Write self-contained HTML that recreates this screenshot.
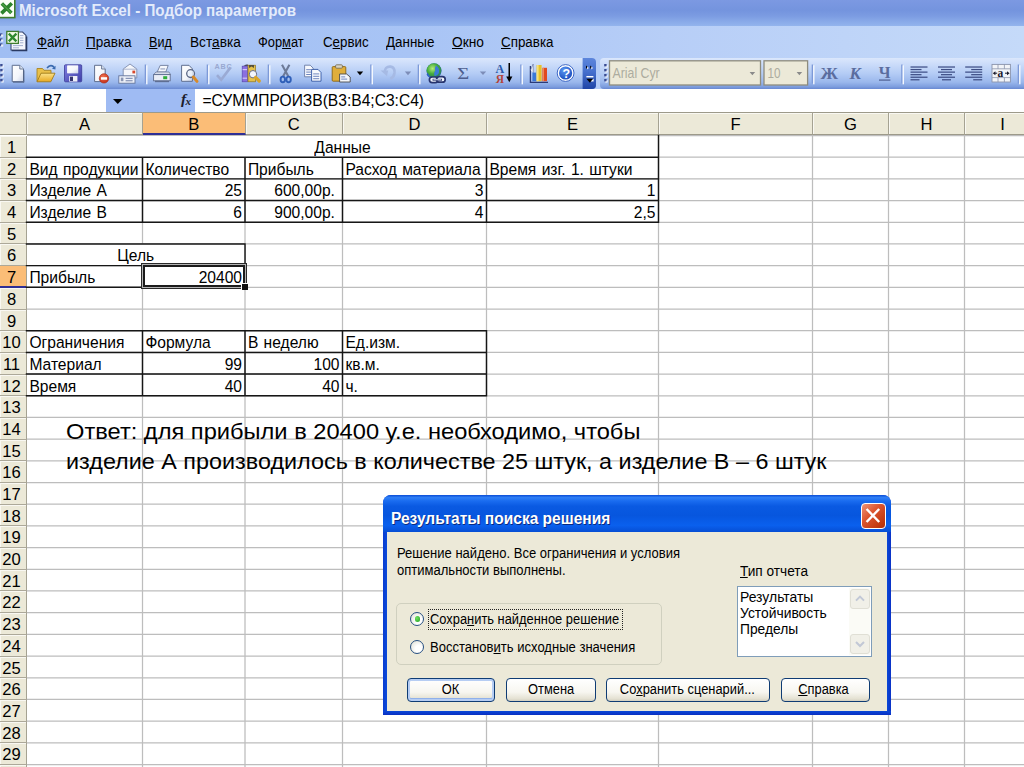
<!DOCTYPE html><html><head><meta charset="utf-8"><title>Excel</title><style>*{box-sizing:border-box;margin:0;padding:0}
html,body{width:1024px;height:767px;overflow:hidden;background:#fff;font-family:"Liberation Sans",sans-serif;}
body{position:relative}
.sx{display:inline-block;transform-origin:0 50%;white-space:nowrap}
#title{position:absolute;left:0;top:0;width:1024px;height:26px;background:linear-gradient(#7c99e2 0,#7494de 40%,#7c9ce2 62%,#8aabe9 85%,#93b4ed 100%);}
#title .t{position:absolute;left:19px;top:0px;font-size:16.8px;line-height:22px;font-weight:bold;color:#e3ebfb;white-space:nowrap;transform:scaleX(.903);transform-origin:0 50%}
#menu{position:absolute;left:0;top:25.5px;width:1024px;height:33px;background:linear-gradient(90deg,#a0bef3 0,#a8c4f5 40%,#b7cef7 65%,#c5daf9 100%);}
#menu span{position:absolute;top:8.5px;font-size:14px;line-height:16px;color:#000;white-space:nowrap;transform:scaleX(.9);transform-origin:0 50%}
#tb{position:absolute;left:0;top:57px;width:1024px;height:32px;background:linear-gradient(90deg,#a0bef3 0,#a8c4f5 40%,#b7cef7 65%,#c5daf9 100%)}
#tb1,#tb2{position:absolute;top:1px;height:31px;background:linear-gradient(#dbe7fc 0,#cbdcfa 20%,#b4ccf5 50%,#9ab7ec 78%,#7f9fdf 92%,#6989d2 100%);}
#tb1{left:0;width:596px;border-radius:0 4px 4px 0}
#tb2{left:600px;width:430px;border-radius:4px 0 0 4px}
#fb{position:absolute;left:0;top:89px;width:1024px;height:24px;background:#9fbbf3}
#fb .nb{position:absolute;left:0;top:0;width:106px;height:24px;background:#fff;font-size:15.6px;line-height:24px;padding-left:42.5px}
#fb .fx{position:absolute;left:195px;top:0;width:829px;height:24px;background:#fff;font-size:15.6px;line-height:24px;padding-left:7.5px;white-space:nowrap}
#sheet{position:absolute;left:0;top:0;width:1024px;height:767px;overflow:hidden}
.ch{position:absolute;top:112px;height:23px;background:#ece9d8;border-right:1px solid #a5a292;border-bottom:1px solid #9d9a8a;border-top:1px solid #9d9a8a;box-shadow:inset 1px 1px 0 #f9f8f2;font-size:16.6px;line-height:24.6px;text-align:center;color:#000}
.ch.sel{background:#fbbd77;border-bottom:2px solid #2f2f96;line-height:24.6px;box-shadow:none}
.corner{position:absolute;left:0;top:112px;width:27px;height:23px;background:#ece9d8;border-right:1px solid #aca899;border-bottom:1px solid #9d9a8a;border-top:1px solid #9d9a8a}
.rh{position:absolute;left:0;width:27px;height:21.69px;line-height:24px;background:#ece9d8;border-right:1px solid #a5a292;border-bottom:1px solid #aca899;box-shadow:inset 0 1px 0 #f9f8f2,inset 1px 0 0 #f9f8f2;font-size:16.6px;text-align:center;padding-right:3px;color:#000;overflow:hidden}
.rh.sel{background:#fbbd77;border-bottom:2px solid #2f2f96;box-shadow:none}
.gh{position:absolute;left:27px;width:997px;height:1px;background:#c6c6c6}
.gv{position:absolute;top:135px;width:1px;height:640px;background:#c6c6c6}
.c{position:absolute;height:21.69px;line-height:23.4px;font-size:15.6px;white-space:nowrap;overflow:visible;color:#000;word-spacing:1px;transform:scaleY(1.07);transform-origin:50% 78%}
.w{position:absolute;background:#fff}
.ov{position:absolute;left:0;top:0}
.bh{position:absolute;height:1.5px;background:#111}
.bv{position:absolute;width:1.5px;background:#111}
.selbox{position:absolute;border:1px solid #2a2a2a}
.selbox .in{position:absolute;left:0;top:0;right:0;bottom:0;border:1px solid #b4b4b4;box-shadow:inset 0 0 0 2px #1c1c1c}
.selh{position:absolute;width:6.6px;height:7px;background:#111;border:1px solid #fff;border-right:none;border-bottom:none}
#ans{position:absolute;left:65.6px;top:417px;font-size:22px;line-height:30.3px;color:#000;white-space:nowrap}
#ans div{transform-origin:0 50%;width:max-content}
/* dialog */
#dlg{position:absolute;left:383px;top:495.4px;width:508px;height:219.4px;background:linear-gradient(90deg,#0a3cd0,#0a52e0 1.2%,#0a52e0 98.8%,#0a32c6);border-radius:8px 8px 0 0;font-size:14px;color:#000}
#dlg .tbar{position:absolute;left:0;top:0;width:100%;height:37px;border-radius:8px 8px 0 0;background:linear-gradient(#0a4cd6 0,#2f7ff6 7%,#1a6cf0 16%,#0a5ae2 30%,#0756de 55%,#0a60ee 82%,#064ed4 100%)}
#dlg .tt{position:absolute;left:7.6px;top:12.6px;font-size:17.4px;line-height:20px;font-weight:bold;color:#fff;white-space:nowrap;transform:scaleX(.893);transform-origin:0 50%;text-shadow:1px 1px 0 #0a2a80}
#dlg .body{position:absolute;left:4px;top:37px;width:500px;height:179px;background:#ece9d8}
#dlg .x{position:absolute;left:477.8px;top:7.6px;width:25px;height:26.4px;border-radius:4px;border:1.6px solid #fff;background:linear-gradient(135deg,#ee9478,#dc5630 40%,#c23a12 80%,#b02e0a)}
#dlg .lbl{position:absolute;white-space:nowrap;line-height:17px;transform:scaleX(.92);transform-origin:0 50%}
#dlg .grp{position:absolute;left:12.5px;top:107.5px;width:266.5px;height:62.5px;border:1px solid #d0d0bf;border-radius:5px}
#dlg .radio{position:absolute;width:14.4px;height:14.4px;border-radius:50%;border:1.2px solid #264f82;background:radial-gradient(circle at 65% 65%,#fff 30%,#dcdccf)}
#dlg .radio.on::after{content:"";position:absolute;left:3.6px;top:3.6px;width:5.6px;height:5.6px;border-radius:50%;background:radial-gradient(circle at 35% 35%,#6fe060,#21a121)}
#dlg .focus{position:absolute;left:44.5px;top:114px;width:195px;height:20.5px;border:1.2px dotted #222}
#dlg .btn{position:absolute;top:182.5px;height:24px;border:1.2px solid #0f3c74;border-radius:4px;background:linear-gradient(#fff,#f7f6f0 60%,#e4e1d2 90%,#d2cfc0);text-align:center;line-height:21px;font-size:14px;white-space:nowrap}
#dlg .btn span{display:inline-block;transform:scaleX(.92)}
#dlg .btn.def{box-shadow:inset 0 0 0 2px #b6cdf3, inset 0 -1px 0 2px #8fb0ea}
#dlg .list{position:absolute;left:353.5px;top:90.5px;width:135px;height:71px;background:#fff;border:1.2px solid #7f9db9}
#dlg .list .li{position:absolute;left:2.4px;white-space:nowrap;line-height:17px;transform:scaleX(.92);transform-origin:0 50%}
#dlg .sb{position:absolute;right:1px;width:20px;height:20px;border:1px solid #e0dfd5;border-radius:3px;background:#f1f0e8}
#dlg .sbt{position:absolute;right:1px;top:1px;width:21px;height:67px;background:#fbfbf6}
</style></head><body>
<div id="title"><svg width="16" height="19" style="position:absolute;left:0;top:0" viewBox="0 0 16 19"><rect x="-2" y="-2" width="16.8" height="19.6" fill="#fbfff6" stroke="#3f7d2c" stroke-width="1.6"/><path d="M1.8 3.4 l9.6 9.6 M11.8 3.2 l-10.4 10.2" stroke="#2c842c" stroke-width="3.6"/><path d="M2 3.6 l9.2 9.2" stroke="#4fa043" stroke-width="1.2"/></svg><div class="t">Microsoft Excel - Подбор параметров</div></div>
<div id="menu">
<svg width="30" height="32" style="position:absolute;left:0;top:.5px" viewBox="0 26 30 32"><g fill="#35478c"><rect x="0" y="33.4" width="2.4" height="2.4"/><rect x="0" y="38.4" width="2.4" height="2.4"/><rect x="0" y="43.4" width="2.4" height="2.4"/></g><g fill="#fff" opacity=".85"><rect x="1" y="34.4" width="2.2" height="2.2"/><rect x="1" y="39.4" width="2.2" height="2.2"/><rect x="1" y="44.4" width="2.2" height="2.2"/></g>
<path d="M11 32 h11.6 l3.4 3.4 v14.6 h-15 z" fill="#f4f7fc" stroke="#3a4a72" stroke-width="1.1"/><path d="M11.6 50.6 h15 v-14" fill="none" stroke="#2a3a62" stroke-width="1.4"/><path d="M20 35.6 h3.4 M20 38 h3.4 M20 40.4 h3.4 M20 42.8 h3.4 M13 45.6 h10 M13 47.8 h6" stroke="#9aa8c8" stroke-width=".9"/>
<rect x="6.8" y="31.4" width="11.6" height="12" fill="#f3fbe6" stroke="#3f7d2c" stroke-width="1.3"/><path d="M8.8 33.6 l7.6 7.8 M16.4 33.6 l-7.6 7.8" stroke="#2f8a2f" stroke-width="2.3"/></svg>
<span style="left:36.6px;transform:scaleX(.93)"><u>Ф</u>айл</span>
<span style="left:86.2px;transform:scaleX(.965)"><u>П</u>равка</span>
<span style="left:149.3px;transform:scaleX(.9)"><u>В</u>ид</span>
<span style="left:190.4px;transform:scaleX(.975)">Вст<u>а</u>вка</span>
<span style="left:258.2px;transform:scaleX(.92)">Фор<u>м</u>ат</span>
<span style="left:322.6px;transform:scaleX(.95)">С<u>е</u>рвис</span>
<span style="left:386px;transform:scaleX(.957)"><u>Д</u>анные</span>
<span style="left:452px;transform:scaleX(.98)"><u>О</u>кно</span>
<span style="left:501.4px;transform:scaleX(.955)"><u>С</u>правка</span>
</div>
<div id="tb"><div id="tb1"></div><div id="tb2"></div></div>
<svg id="tbsvg" width="1024" height="33" viewBox="0 57 1024 33" style="position:absolute;left:0;top:57px"><defs><linearGradient id="pg" x1="0" y1="0" x2="1" y2="1"><stop offset="0" stop-color="#fff"/><stop offset=".6" stop-color="#f4f6fb"/><stop offset="1" stop-color="#c9d2e6"/></linearGradient><linearGradient id="fold" x1="0" y1="0" x2="0" y2="1"><stop offset="0" stop-color="#fbe38a"/><stop offset="1" stop-color="#e8a820"/></linearGradient><linearGradient id="flop" x1="0" y1="0" x2="1" y2="1"><stop offset="0" stop-color="#7f7fe0"/><stop offset="1" stop-color="#3f3fa8"/></linearGradient><radialGradient id="globe" cx=".4" cy=".35" r=".7"><stop offset="0" stop-color="#b4ec7c"/><stop offset=".5" stop-color="#45ac3c"/><stop offset=".85" stop-color="#2f8a4a" stop-opacity=".9"/><stop offset="1" stop-color="#2a6ab8" stop-opacity=".6"/></radialGradient><radialGradient id="help" cx=".4" cy=".3" r=".8"><stop offset="0" stop-color="#5b97f2"/><stop offset="1" stop-color="#1546b8"/></radialGradient><radialGradient id="red" cx=".4" cy=".3" r=".8"><stop offset="0" stop-color="#f07050"/><stop offset="1" stop-color="#c02810"/></radialGradient><linearGradient id="cap" x1="0" y1="0" x2="0" y2="1"><stop offset="0" stop-color="#5d86dc"/><stop offset=".45" stop-color="#456fcd"/><stop offset="1" stop-color="#1f44a6"/></linearGradient></defs><rect x="1.3" y="65.2" width="2.3" height="2.3" fill="#fff"/><rect x="0.2" y="64" width="2.4" height="2.4" fill="#3a4c92"/><rect x="1.3" y="70.2" width="2.3" height="2.3" fill="#fff"/><rect x="0.2" y="69" width="2.4" height="2.4" fill="#3a4c92"/><rect x="1.3" y="75.2" width="2.3" height="2.3" fill="#fff"/><rect x="0.2" y="74" width="2.4" height="2.4" fill="#3a4c92"/><rect x="1.3" y="80.2" width="2.3" height="2.3" fill="#fff"/><rect x="0.2" y="79" width="2.4" height="2.4" fill="#3a4c92"/><path d="M12.2 65.3 h7.6 l3.7 3.7 v12.6 h-11.3 z" fill="url(#pg)" stroke="#5f6f8f" stroke-width="1"/><path d="M19.8 65.3 v3.7 h3.7" fill="#dfe5f2" stroke="#5f6f8f" stroke-width=".9"/><path d="M13 82.3 h11 v-12" fill="none" stroke="#3a4a6a" stroke-width="1" opacity=".6"/><path d="M37 81.5 v-13 h5.5 l1.5 1.8 h7 v3" fill="#e9c04a" stroke="#a88422" stroke-width=".9"/><path d="M37 81.8 l4 -8.6 h14 l-4.2 8.6 z" fill="url(#fold)" stroke="#a07a18" stroke-width=".9"/><path d="M47 68 q4 -4.5 7.3 -0.6" fill="none" stroke="#3a6ab0" stroke-width="1.6"/><path d="M52 68.8 l3.4 0.6 l0.2 -3.6 z" fill="#3a6ab0"/><rect x="64.5" y="64.8" width="17.2" height="17" rx="1" fill="url(#flop)" stroke="#3a3a98" stroke-width=".8"/><rect x="67.3" y="65.6" width="10.8" height="7.6" fill="#fff"/><rect x="67.3" y="65.6" width="10.8" height="7.6" fill="url(#pg)"/><rect x="69.2" y="76" width="8.2" height="5.6" fill="#eef0f8"/><rect x="70" y="76.6" width="3" height="4.4" fill="#34346e"/><path d="M94.6 65.3 h7 l3.6 3.7 v12.6 h-10.6 z" fill="url(#pg)" stroke="#5f6f8f" stroke-width="1"/><path d="M101.6 65.3 v3.7 h3.6" fill="#dfe5f2" stroke="#5f6f8f" stroke-width=".9"/><circle cx="104" cy="78.4" r="4.7" fill="url(#red)" stroke="#a82a14" stroke-width=".6"/><rect x="100.9" y="77.2" width="6.2" height="2.5" fill="#fff"/><path d="M123.2 77 v-8 l6.8 -5 l6.8 5 v9 z" fill="#f6f7fb" stroke="#7e8cae" stroke-width=".9"/><path d="M123.4 69.2 h13.4" stroke="#9aa6c4" stroke-width=".8"/><rect x="132.4" y="70.6" width="2.8" height="2.8" fill="#d8482c"/><rect x="118.8" y="75.8" width="16.2" height="7.4" fill="#eef1f8" stroke="#62739b" stroke-width=".9"/><rect x="120.8" y="77.6" width="2.6" height="3.6" fill="#8a96b4"/><rect x="125.6" y="77.8" width="7" height="1.1" fill="#7d8aae"/><rect x="125.6" y="80.2" width="7" height="1.1" fill="#7d8aae"/><rect x="144.7" y="64.5" width="1.4" height="19" fill="#7d9ad8"/><rect x="146.1" y="65.3" width="1.4" height="19" fill="#f4f8fe"/><path d="M157.2 72 l3 -6.6 h8 l-2.4 6.6 z" fill="#f6f8fc" stroke="#6e7c9c" stroke-width=".9"/><rect x="160.4" y="68" width="4.8" height="1.8" fill="#b8c0d4"/><path d="M153.6 74.6 l2.4 -2.6 h13 l1.6 2.6 z" fill="#d6dcea" stroke="#6e7c9c" stroke-width=".8"/><rect x="153.6" y="74.6" width="16.6" height="6.2" fill="#e9edf6" stroke="#5c6b8e" stroke-width=".9"/><rect x="163.2" y="76.2" width="4" height="3" fill="#2fae3a"/><rect x="155" y="80.8" width="14" height="1.4" fill="#5f6e92"/><path d="M181.6 65.3 h7.4 l3.4 3.6 v12.4 h-10.8 z" fill="url(#pg)" stroke="#5f6f8f" stroke-width="1"/><circle cx="190.6" cy="73.6" r="3.9" fill="#eaf1fb" fill-opacity=".85" stroke="#5a6684" stroke-width="1.3"/><path d="M193.4 77 l3.6 4.4" stroke="#d98a28" stroke-width="3" stroke-linecap="round"/><rect x="206.7" y="64.5" width="1.4" height="19" fill="#7d9ad8"/><rect x="208.1" y="65.3" width="1.4" height="19" fill="#f4f8fe"/><text x="214.6" y="69.4" font-family="Liberation Sans" font-size="7.2" font-weight="bold" fill="#98a8d0" textLength="17">ABC</text><path d="M217 75.2 l4.2 4.6 l9.4 -12.4" fill="none" stroke="#9aaad4" stroke-width="2.6"/><rect x="242.2" y="66.2" width="5.2" height="15.6" fill="#8a6fe0" stroke="#5a48b0" stroke-width=".7"/><rect x="242.6" y="69" width="4.4" height="1.2" fill="#cfc4f6"/><rect x="242.6" y="77.6" width="4.4" height="1.2" fill="#cfc4f6"/><path d="M243.4 66 l2.6 -1.6 h2 v1.6z" fill="#4a4a6a"/><rect x="248" y="65.2" width="7.4" height="16.6" fill="#e4c04a" stroke="#8c7420" stroke-width=".7"/><path d="M249 65 h5 v3 l-2.5 -1.6 l-2.5 1.6z" fill="#55503a"/><circle cx="253" cy="74.2" r="3.7" fill="#f2f5fb" stroke="#6a6e84" stroke-width="1"/><path d="M255.6 77.4 l3.6 3.6" stroke="#d9a428" stroke-width="3.2" stroke-linecap="round"/><rect x="267.7" y="64.5" width="1.4" height="19" fill="#7d9ad8"/><rect x="269.1" y="65.3" width="1.4" height="19" fill="#f4f8fe"/><path d="M282 64.8 L288.4 76.6 M289.4 64.8 L283 76.6" stroke="#6d7b98" stroke-width="2.1" fill="none"/><ellipse cx="282.8" cy="79.4" rx="2.2" ry="2.8" fill="none" stroke="#2f5fb8" stroke-width="1.9"/><ellipse cx="288.6" cy="79.4" rx="2.2" ry="2.8" fill="none" stroke="#2f5fb8" stroke-width="1.9"/><path d="M304.6 65.2 h5.6 l3 3 v8.6 h-8.6 z" fill="#f7f9fd" stroke="#6a7ca6" stroke-width=".9"/><rect x="306.20000000000005" y="69.2" width="5.199999999999999" height="1" fill="#6f86bd"/><rect x="306.20000000000005" y="71.60000000000001" width="5.199999999999999" height="1" fill="#6f86bd"/><rect x="306.20000000000005" y="74.0" width="5.199999999999999" height="1" fill="#6f86bd"/><path d="M311.6 69.4 h6.4 l3 3 v8.8 h-9.4 z" fill="#f7f9fd" stroke="#2f55a4" stroke-width=".9"/><rect x="313.20000000000005" y="73.4" width="6.0" height="1" fill="#6f86bd"/><rect x="313.20000000000005" y="75.80000000000001" width="6.0" height="1" fill="#6f86bd"/><rect x="313.20000000000005" y="78.2" width="6.0" height="1" fill="#6f86bd"/><rect x="332.2" y="66.6" width="13.6" height="14.6" rx="1" fill="#e0ae3a" stroke="#8a6414" stroke-width=".9"/><rect x="335.6" y="64.8" width="6.8" height="3.4" rx="1" fill="#d9d4c4" stroke="#6f664c" stroke-width=".8"/><path d="M339.6 74 h7 l3.6 3 v5 h-10.6 z" fill="#f4f6fb" stroke="#4a4a4a" stroke-width=".9"/><rect x="341.2" y="76.4" width="4" height="1" fill="#6f86bd"/><rect x="341.2" y="78.6" width="6" height="1" fill="#6f86bd"/><path d="M356.8 71.60000000000001 h6.4 l-3.2 3.6 z" fill="#000"/><rect x="370.2" y="64.5" width="1.4" height="19" fill="#7d9ad8"/><rect x="371.6" y="65.3" width="1.4" height="19" fill="#f4f8fe"/><path d="M384.5 72.8 q0.4 -6.6 6 -6.2 q4.6 0.8 4 6.4 q-0.6 4.4 -4.2 5.8" fill="none" stroke="#a6bae4" stroke-width="2.6"/><path d="M380.6 70.6 h7.6 l-1.2 5.6 z" fill="#a6bae4"/><path d="M404.8 71.60000000000001 h6.4 l-3.2 3.6 z" fill="#7d8db8"/><rect x="417.7" y="64.5" width="1.4" height="19" fill="#7d9ad8"/><rect x="419.1" y="65.3" width="1.4" height="19" fill="#f4f8fe"/><circle cx="434" cy="70.8" r="7.5" fill="#2f6fd0"/><circle cx="434" cy="70.8" r="7.5" fill="url(#globe)"/><path d="M436.2 65.4 q3.8 2.6 2.6 7.8 q-2 3.2 -4.4 2.6 q-1 -3 0.8 -5.4 q-0.8 -3 1 -5z" fill="#3a7ad8"/><path d="M427.4 72.4 q1.6 3.6 5 5.4 q-4.4 0.4 -5.8 -3.4z" fill="#2f62c4"/><rect x="429.4" y="77" width="8.6" height="5.6" rx="2.8" fill="#eef2fa" stroke="#27346e" stroke-width="1.7"/><rect x="436.6" y="76.6" width="8.6" height="5.6" rx="2.8" fill="#eef2fa" stroke="#27346e" stroke-width="1.7"/><rect x="432.6" y="78.8" width="9.4" height="1.9" fill="#27346e"/><rect x="433.4" y="79.3" width="7.8" height=".9" fill="#dfe6f6"/><text x="457.2" y="79.4" font-family="Liberation Serif" font-size="17.5" fill="#4d5e8e" textLength="12" lengthAdjust="spacingAndGlyphs">Σ</text><path d="M479.8 71.4 h6.4 l-3.2 3.6 z" fill="#7d8db8"/><text x="495.6" y="72.6" font-family="Liberation Serif" font-size="12" font-weight="bold" fill="#2a58a8">А</text><text x="495.8" y="83.2" font-family="Liberation Serif" font-size="11.5" font-weight="bold" fill="#b4443a">Я</text><rect x="508.5" y="63" width="1.5" height="16" fill="#000"/><path d="M506.2 76.6 h6.2 l-3.1 5.6z" fill="#000"/><rect x="520.2" y="64.5" width="1.4" height="19" fill="#7d9ad8"/><rect x="521.6" y="65.3" width="1.4" height="19" fill="#f4f8fe"/><path d="M530.4 66 v16.4 h17.6" fill="none" stroke="#2a3a78" stroke-width="1.3"/><path d="M530.6 70 l2.6 -6 v9" fill="#f4f6fb" stroke="#5a6a9a" stroke-width=".6"/><rect x="532.4" y="72.6" width="3.6" height="8.6" fill="#3a78d8"/><rect x="536.6" y="65" width="5" height="16.2" fill="#e8c028"/><rect x="537" y="65" width="1.6" height="16.2" fill="#f6e27a"/><rect x="542.4" y="67.8" width="4.6" height="13.4" fill="#e04a20"/><rect x="542.6" y="67.8" width="1.4" height="13.4" fill="#f08a5a"/><circle cx="565.6" cy="73" r="8.4" fill="#fff" stroke="#2a58c0" stroke-width=".9"/><circle cx="565.6" cy="73" r="6.6" fill="url(#help)"/><text x="562.4" y="77.8" font-family="Liberation Sans" font-size="12.5" font-weight="bold" fill="#fff">?</text><path d="M582.6 58 h9.4 q4 0 4 4 v23 q0 4 -4 4 h-9.4z" fill="url(#cap)"/><path d="M586 65.6 l2 1.6 l-2 1.6z M590.2 65.6 l2 1.6 l-2 1.6z" fill="#000"/><path d="M587 66.4 l2 1.6 l-2 1.6z M591.2 66.4 l2 1.6 l-2 1.6z" fill="#fff" opacity=".8"/><rect x="586.4" y="76" width="7" height="1.4" fill="#fff"/><path d="M586.4 78.8 h7 l-3.5 4z" fill="#000"/><path d="M590.6 81.6 l3 -3.2 v3.2z" fill="#fff"/><rect x="605.3" y="65.2" width="2.3" height="2.3" fill="#fff"/><rect x="604.2" y="64" width="2.4" height="2.4" fill="#3a4c92"/><rect x="605.3" y="70.2" width="2.3" height="2.3" fill="#fff"/><rect x="604.2" y="69" width="2.4" height="2.4" fill="#3a4c92"/><rect x="605.3" y="75.2" width="2.3" height="2.3" fill="#fff"/><rect x="604.2" y="74" width="2.4" height="2.4" fill="#3a4c92"/><rect x="605.3" y="80.2" width="2.3" height="2.3" fill="#fff"/><rect x="604.2" y="79" width="2.4" height="2.4" fill="#3a4c92"/><rect x="609.5" y="60.8" width="151" height="24.2" fill="#ece9d8" stroke="#8e8c7e" stroke-width="1.3"/><text x="612.6" y="78.4" font-family="Liberation Sans" font-size="14.6" fill="#adac9f" textLength="47" lengthAdjust="spacingAndGlyphs">Arial Cyr</text><path d="M749.6 72.0 h5.6 l-2.8 3.2 z" fill="#8a8a8a"/><rect x="764" y="60.8" width="43.6" height="24.2" fill="#ece9d8" stroke="#8e8c7e" stroke-width="1.3"/><text x="767.6" y="78.4" font-family="Liberation Sans" font-size="14.6" fill="#adac9f" textLength="13" lengthAdjust="spacingAndGlyphs">10</text><path d="M796.6 72.0 h5.6 l-2.8 3.2 z" fill="#8a8a8a"/><rect x="811.7" y="64.5" width="1.4" height="19" fill="#7d9ad8"/><rect x="813.1" y="65.3" width="1.4" height="19" fill="#f4f8fe"/><text x="820.6" y="79.2" font-family="Liberation Serif" font-size="17" font-weight="bold" fill="#5a6c9e" textLength="17.5" lengthAdjust="spacingAndGlyphs">Ж</text><text x="849.6" y="79.2" font-family="Liberation Serif" font-size="17" font-weight="bold" font-style="italic" fill="#5a6c9e">К</text><text x="878.8" y="77.6" font-family="Liberation Serif" font-size="16" font-weight="bold" fill="#5a6c9e">Ч</text><rect x="879" y="79.4" width="11.4" height="1.4" fill="#5a6c9e"/><rect x="901.2" y="64.5" width="1.4" height="19" fill="#7d9ad8"/><rect x="902.6" y="65.3" width="1.4" height="19" fill="#f4f8fe"/><rect x="910.5" y="66.40" width="17" height="1.25" fill="#3f4f86"/><rect x="910.5" y="68.95" width="11" height="1.25" fill="#3f4f86"/><rect x="910.5" y="71.50" width="17" height="1.25" fill="#3f4f86"/><rect x="910.5" y="74.05" width="11" height="1.25" fill="#3f4f86"/><rect x="910.5" y="76.60" width="17" height="1.25" fill="#3f4f86"/><rect x="910.5" y="79.15" width="9" height="1.25" fill="#3f4f86"/><rect x="938.0" y="66.40" width="17" height="1.25" fill="#3f4f86"/><rect x="941.0" y="68.95" width="11" height="1.25" fill="#3f4f86"/><rect x="938.0" y="71.50" width="17" height="1.25" fill="#3f4f86"/><rect x="941.0" y="74.05" width="11" height="1.25" fill="#3f4f86"/><rect x="938.0" y="76.60" width="17" height="1.25" fill="#3f4f86"/><rect x="942.0" y="79.15" width="9" height="1.25" fill="#3f4f86"/><rect x="965.2" y="66.40" width="17" height="1.25" fill="#3f4f86"/><rect x="971.2" y="68.95" width="11" height="1.25" fill="#3f4f86"/><rect x="965.2" y="71.50" width="17" height="1.25" fill="#3f4f86"/><rect x="971.2" y="74.05" width="11" height="1.25" fill="#3f4f86"/><rect x="965.2" y="76.60" width="17" height="1.25" fill="#3f4f86"/><rect x="973.2" y="79.15" width="9" height="1.25" fill="#3f4f86"/><rect x="992" y="64.4" width="18.4" height="17.6" fill="#f2f4f8" stroke="#8a93ab" stroke-width=".9"/><path d="M992 68.8 h18.4 M992 77.6 h18.4 M998 64.4 v4.4 M1004.4 64.4 v4.4 M998 77.6 v4.4 M1004.4 77.6 v4.4" stroke="#8a93ab" stroke-width=".8"/><text x="997.6" y="77" font-family="Liberation Serif" font-size="11.5" font-weight="bold" fill="#1a1a2a">a</text><path d="M992.8 73.2 l2.6 -2 v4z M1009.6 73.2 l-2.6 -2 v4z" fill="#1a1a2a"/><path d="M995 73.2 h2.2 M1005 73.2 h2.2" stroke="#1a1a2a" stroke-width="1"/><rect x="1017.7" y="64.5" width="1.4" height="19" fill="#7d9ad8"/><rect x="1019.1" y="65.3" width="1.4" height="19" fill="#f4f8fe"/></svg>
<div id="fb"><div class="nb">B7</div><svg width="90" height="24" style="position:absolute;left:106px;top:0" viewBox="106 89 90 24"><path d="M113 99 h9.6 l-4.8 5z" fill="#000"/><text x="181" y="104.4" font-family="Liberation Serif" font-size="15.5" font-style="italic" font-weight="bold" fill="#1c1c2c">f</text><text x="185.4" y="105" font-family="Liberation Serif" font-size="11" font-style="italic" font-weight="bold" fill="#1c1c2c">x</text></svg><div class="fx">=СУММПРОИЗВ(B3:B4;C3:C4)</div></div>

<div id="sheet">
<div class="ch" style="left:27px;width:116px">A</div>
<div class="ch sel" style="left:143px;width:102.5px">B</div>
<div class="ch" style="left:245.5px;width:97.5px">C</div>
<div class="ch" style="left:343px;width:144px">D</div>
<div class="ch" style="left:487px;width:172px">E</div>
<div class="ch" style="left:659px;width:154px">F</div>
<div class="ch" style="left:813px;width:76px">G</div>
<div class="ch" style="left:889px;width:76px">H</div>
<div class="ch" style="left:965px;width:76px">I</div>
<div class="corner"></div>
<div class="rh" style="top:136px">1</div>
<div class="rh" style="top:157.69px">2</div>
<div class="rh" style="top:179.38px">3</div>
<div class="rh" style="top:201.07px">4</div>
<div class="rh" style="top:222.76px">5</div>
<div class="rh" style="top:244.45px">6</div>
<div class="rh sel" style="top:266.14px">7</div>
<div class="rh" style="top:287.83px">8</div>
<div class="rh" style="top:309.52px">9</div>
<div class="rh" style="top:331.21px">10</div>
<div class="rh" style="top:352.9px">11</div>
<div class="rh" style="top:374.59px">12</div>
<div class="rh" style="top:396.28px">13</div>
<div class="rh" style="top:417.97px">14</div>
<div class="rh" style="top:439.66px">15</div>
<div class="rh" style="top:461.35px">16</div>
<div class="rh" style="top:483.04px">17</div>
<div class="rh" style="top:504.73px">18</div>
<div class="rh" style="top:526.42px">19</div>
<div class="rh" style="top:548.11px">20</div>
<div class="rh" style="top:569.8px">21</div>
<div class="rh" style="top:591.49px">22</div>
<div class="rh" style="top:613.18px">23</div>
<div class="rh" style="top:634.87px">24</div>
<div class="rh" style="top:656.56px">25</div>
<div class="rh" style="top:678.25px">26</div>
<div class="rh" style="top:699.94px">27</div>
<div class="rh" style="top:721.63px">28</div>
<div class="rh" style="top:743.32px">29</div>
<div class="rh" style="top:765.01px">30</div>
<svg class="ov" width="1024" height="767" viewBox="0 0 1024 767"><path d="M27 135.5H1024M27 157.19H1024M27 178.88H1024M27 200.57H1024M27 222.26H1024M27 243.95H1024M27 265.64H1024M27 287.33H1024M27 309.02H1024M27 330.71H1024M27 352.4H1024M27 374.09H1024M27 395.78H1024M27 417.47H1024M27 439.16H1024M27 460.85H1024M27 482.54H1024M27 504.23H1024M27 525.92H1024M27 547.61H1024M27 569.3H1024M27 590.99H1024M27 612.68H1024M27 634.37H1024M27 656.06H1024M27 677.75H1024M27 699.44H1024M27 721.13H1024M27 742.82H1024M27 764.51H1024M27 786.2H1024M142.5 135V767M245 135V767M342.5 135V767M486.5 135V767M658.5 135V767M812.5 135V767M888.5 135V767M964.5 135V767M1040.5 135V767" stroke="#bdbdbd" stroke-width="1.25" fill="none"/></svg>
<div class="w" style="left:27px;top:136px;width:631px;height:20.69px"></div>
<div class="w" style="left:27px;top:244.45px;width:217.5px;height:20.69px"></div>
<div class="c" style="left:27px;top:136px;width:631px;text-align:center;">Данные</div>
<div class="c" style="left:27px;top:157.69px;width:115px;text-align:left;padding-left:2.4px;">Вид продукции</div>
<div class="c" style="left:143px;top:157.69px;width:101.5px;text-align:left;padding-left:2.4px;">Количество</div>
<div class="c" style="left:245.5px;top:157.69px;width:96.5px;text-align:left;padding-left:2.4px;">Прибыль</div>
<div class="c" style="left:343px;top:157.69px;width:143px;text-align:left;padding-left:2.4px;">Расход материала</div>
<div class="c" style="left:487px;top:157.69px;width:171px;text-align:left;padding-left:2.4px;">Время изг. 1. штуки</div>
<div class="c" style="left:27px;top:179.38px;width:115px;text-align:left;padding-left:2.4px;">Изделие А</div>
<div class="c" style="left:143px;top:179.38px;width:101.5px;text-align:right;padding-right:2.5px;">25</div>
<div class="c" style="left:245.5px;top:179.38px;width:96.5px;text-align:right;padding-right:2.5px;">600,00р.<i style="display:inline-block;width:4.6px"></i></div>
<div class="c" style="left:343px;top:179.38px;width:143px;text-align:right;padding-right:2.5px;">3</div>
<div class="c" style="left:487px;top:179.38px;width:171px;text-align:right;padding-right:2.5px;">1</div>
<div class="c" style="left:27px;top:201.07px;width:115px;text-align:left;padding-left:2.4px;">Изделие В</div>
<div class="c" style="left:143px;top:201.07px;width:101.5px;text-align:right;padding-right:2.5px;">6</div>
<div class="c" style="left:245.5px;top:201.07px;width:96.5px;text-align:right;padding-right:2.5px;">900,00р.<i style="display:inline-block;width:4.6px"></i></div>
<div class="c" style="left:343px;top:201.07px;width:143px;text-align:right;padding-right:2.5px;">4</div>
<div class="c" style="left:487px;top:201.07px;width:171px;text-align:right;padding-right:2.5px;">2,5</div>
<div class="c" style="left:27px;top:266.14px;width:115px;text-align:left;padding-left:2.4px;">Прибыль</div>
<div class="c" style="left:143px;top:266.14px;width:101.5px;text-align:right;padding-right:2.5px;">20400</div>
<div class="c" style="left:27px;top:331.21px;width:115px;text-align:left;padding-left:2.4px;">Ограничения</div>
<div class="c" style="left:143px;top:331.21px;width:101.5px;text-align:left;padding-left:2.4px;">Формула</div>
<div class="c" style="left:245.5px;top:331.21px;width:96.5px;text-align:left;padding-left:2.4px;">В неделю</div>
<div class="c" style="left:343px;top:331.21px;width:143px;text-align:left;padding-left:2.4px;">Ед.изм.</div>
<div class="c" style="left:27px;top:352.9px;width:115px;text-align:left;padding-left:2.4px;">Материал</div>
<div class="c" style="left:143px;top:352.9px;width:101.5px;text-align:right;padding-right:2.5px;">99</div>
<div class="c" style="left:245.5px;top:352.9px;width:96.5px;text-align:right;padding-right:2.5px;">100</div>
<div class="c" style="left:343px;top:352.9px;width:143px;text-align:left;padding-left:2.4px;">кв.м.</div>
<div class="c" style="left:27px;top:374.59px;width:115px;text-align:left;padding-left:2.4px;">Время</div>
<div class="c" style="left:143px;top:374.59px;width:101.5px;text-align:right;padding-right:2.5px;">40</div>
<div class="c" style="left:245.5px;top:374.59px;width:96.5px;text-align:right;padding-right:2.5px;">40</div>
<div class="c" style="left:343px;top:374.59px;width:143px;text-align:left;padding-left:2.4px;">ч.</div>
<div class="c" style="left:27px;top:244.45px;width:217.5px;text-align:center;">Цель</div>
<svg class="ov" width="1024" height="767" viewBox="0 0 1024 767"><path d="M25.77 157.19H659.23M25.77 178.88H659.23M25.77 200.57H659.23M25.77 222.26H659.23M658.5 134.78V222.98M142.5 156.47V222.98M245 156.47V222.98M342.5 156.47V222.98M486.5 156.47V222.98M25.77 243.95H245.72M25.77 265.64H245.72M25.77 287.33H245.72M245 243.22V288.06M142.5 264.91V288.06M25.77 330.71H487.23M25.77 352.4H487.23M25.77 374.09H487.23M25.77 395.78H487.23M142.5 329.99V396.51M245 329.99V396.51M342.5 329.99V396.51M486.5 329.99V396.51" stroke="#161616" stroke-width="1.45" fill="none"/></svg>
<div class="selbox" style="left:141px;top:263px;width:106px;height:26px"><div class="in"></div></div>
<div class="selh" style="left:241.4px;top:283.4px"></div>
<div id="ans"><div style="transform:scaleX(1.075)">Ответ: для прибыли в 20400 у.е. необходимо, чтобы</div><div style="transform:scaleX(1.062)">изделие А производилось в количестве 25 штук, а изделие В – 6 штук</div></div>
</div>
<div id="dlg">
<div class="tbar"></div>
<div class="tt">Результаты поиска решения</div>
<div class="x"><svg width="22" height="23" viewBox="0 0 22 23" style="position:absolute;left:0;top:0"><path d="M4.6 5 l12.6 13 M17.2 5 l-12.6 13" stroke="#fff" stroke-width="2.5"/></svg></div>
<div class="body"></div><div style="position:absolute;left:0;bottom:0;width:100%;height:3.6px;background:linear-gradient(#0a48d8,#0a2fc2)"></div>
<div class="lbl" style="left:14px;top:50px;transform:scaleX(.931)">Решение найдено. Все ограничения и условия</div>
<div class="lbl" style="left:14px;top:67px;transform:scaleX(.931)">оптимальности выполнены.</div>
<div class="grp"></div>
<div class="radio on" style="left:27px;top:116.5px"></div>
<div class="radio" style="left:27px;top:144.5px"></div>
<div class="focus"></div>
<div class="lbl" style="left:47px;top:116px">Сохра<u>н</u>ить найденное решение</div>
<div class="lbl" style="left:47px;top:144px;transform:scaleX(.932)">Восстанов<u>и</u>ть исходные значения</div>
<div class="lbl" style="left:357px;top:68px;transform:scaleX(.975)"><u>Т</u>ип отчета</div>
<div class="list">
<div class="li" style="top:2px;transform:scaleX(.995)">Результаты</div>
<div class="li" style="top:18px;transform:scaleX(.99)">Устойчивость</div>
<div class="li" style="top:34.5px;transform:scaleX(.985)">Пределы</div>
<div class="sbt"></div>
<div class="sb" style="top:2px"><svg width="18" height="18" viewBox="0 0 18 18"><path d="M5 10.6 l4 -4 l4 4" fill="none" stroke="#c2c8d6" stroke-width="2"/></svg></div>
<div class="sb" style="bottom:2px"><svg width="18" height="18" viewBox="0 0 18 18"><path d="M5 7 l4 4 l4 -4" fill="none" stroke="#c2c8d6" stroke-width="2"/></svg></div>
</div>
<div class="btn def" style="left:23.5px;width:88.5px"><span>ОК</span></div>
<div class="btn" style="left:123px;width:89.5px"><span>Отмена</span></div>
<div class="btn" style="left:223px;width:163.5px"><span>Со<u>х</u>ранить сценарий...</span></div>
<div class="btn" style="left:397.5px;width:89.5px"><span style="margin-left:-3px"><u>С</u>правка</span></div>
</div>

</body></html>
